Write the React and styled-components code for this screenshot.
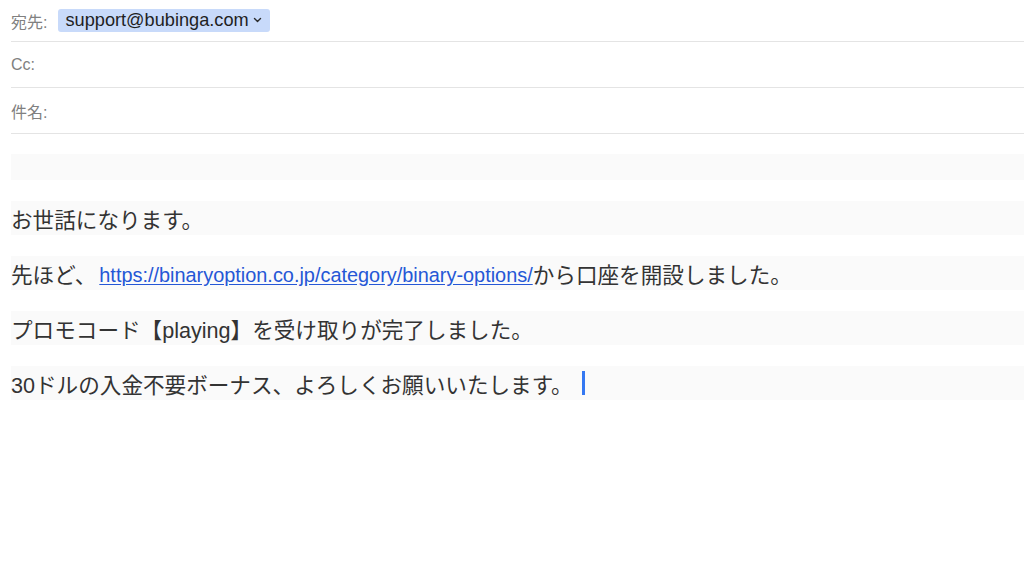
import styled, { createGlobalStyle } from 'styled-components';

const GlobalStyle = createGlobalStyle`
  html, body {
    margin: 0;
    padding: 0;
    background: #ffffff;
  }
  body {
    font-family: 'Liberation Sans', 'Noto Sans CJK JP', sans-serif;
    color: #333333;
  }
`;

const Compose = styled.div`
  padding-left: 11px;
  width: 1013px;
`;

const HeaderRow = styled.div`
  display: flex;
  align-items: center;
  gap: 11px;
  height: ${(p) => (p.$first ? '41px' : '45px')};
  border-bottom: 1px solid #e4e4e4;
`;

const Label = styled.span`
  font-size: 16px;
  color: #808080;
  font-family: 'Liberation Sans', 'Noto Sans CJK JP', sans-serif;
`;

const Recipient = styled.span`
  display: inline-flex;
  align-items: center;
  gap: 4px;
  height: 23px;
  padding: 0 8px 0 7px;
  background: #c8dafa;
  border-radius: 3px;
  font-size: 18.2px;
  color: #1f1f1f;
  margin-top: -1px;
`;

const Body = styled.div`
  padding-top: 20px;
  display: flex;
  flex-direction: column;
  gap: 21px;
`;

const Line = styled.div`
  display: flex;
  align-items: center;
  height: ${(p) => (p.$empty ? '26px' : '34px')};
  background: #fafafa;
  font-size: 21.6px;
  color: #333333;
  white-space: nowrap;
`;

const Link = styled.a`
  font-size: 19.9px;
  color: #2557d6;
  text-decoration: underline;
  text-underline-offset: 2px;
  margin-left: 3px;
  position: relative;
  top: 2px;
`;

const Caret = styled.span`
  display: inline-block;
  width: 3px;
  height: 24px;
  background: #3478f2;
  margin-left: 9px;
`;

const Chevron = () => (
  <svg width="9" height="6" viewBox="0 0 9 6" fill="none">
    <path d="M1.5 1.5 L4.5 4.5 L7.5 1.5" stroke="#2a2a2a" strokeWidth="1.4" strokeLinecap="round" strokeLinejoin="round" />
  </svg>
);

export default function App() {
  return (
    <Compose>
      <GlobalStyle />
      <HeaderRow $first>
        <Label>宛先:</Label>
        <Recipient>
          support@bubinga.com
          <Chevron />
        </Recipient>
      </HeaderRow>
      <HeaderRow>
        <Label>Cc:</Label>
      </HeaderRow>
      <HeaderRow>
        <Label>件名:</Label>
      </HeaderRow>
      <Body>
        <Line $empty />
        <Line>お世話になります。</Line>
        <Line>
          先ほど、
          <Link href="#">https://binaryoption.co.jp/category/binary-options/</Link>
          から口座を開設しました。
        </Line>
        <Line>プロモコード【playing】を受け取りが完了しました。</Line>
        <Line>
          30ドルの入金不要ボーナス、よろしくお願いいたします。
          <Caret />
        </Line>
      </Body>
    </Compose>
  );
}
